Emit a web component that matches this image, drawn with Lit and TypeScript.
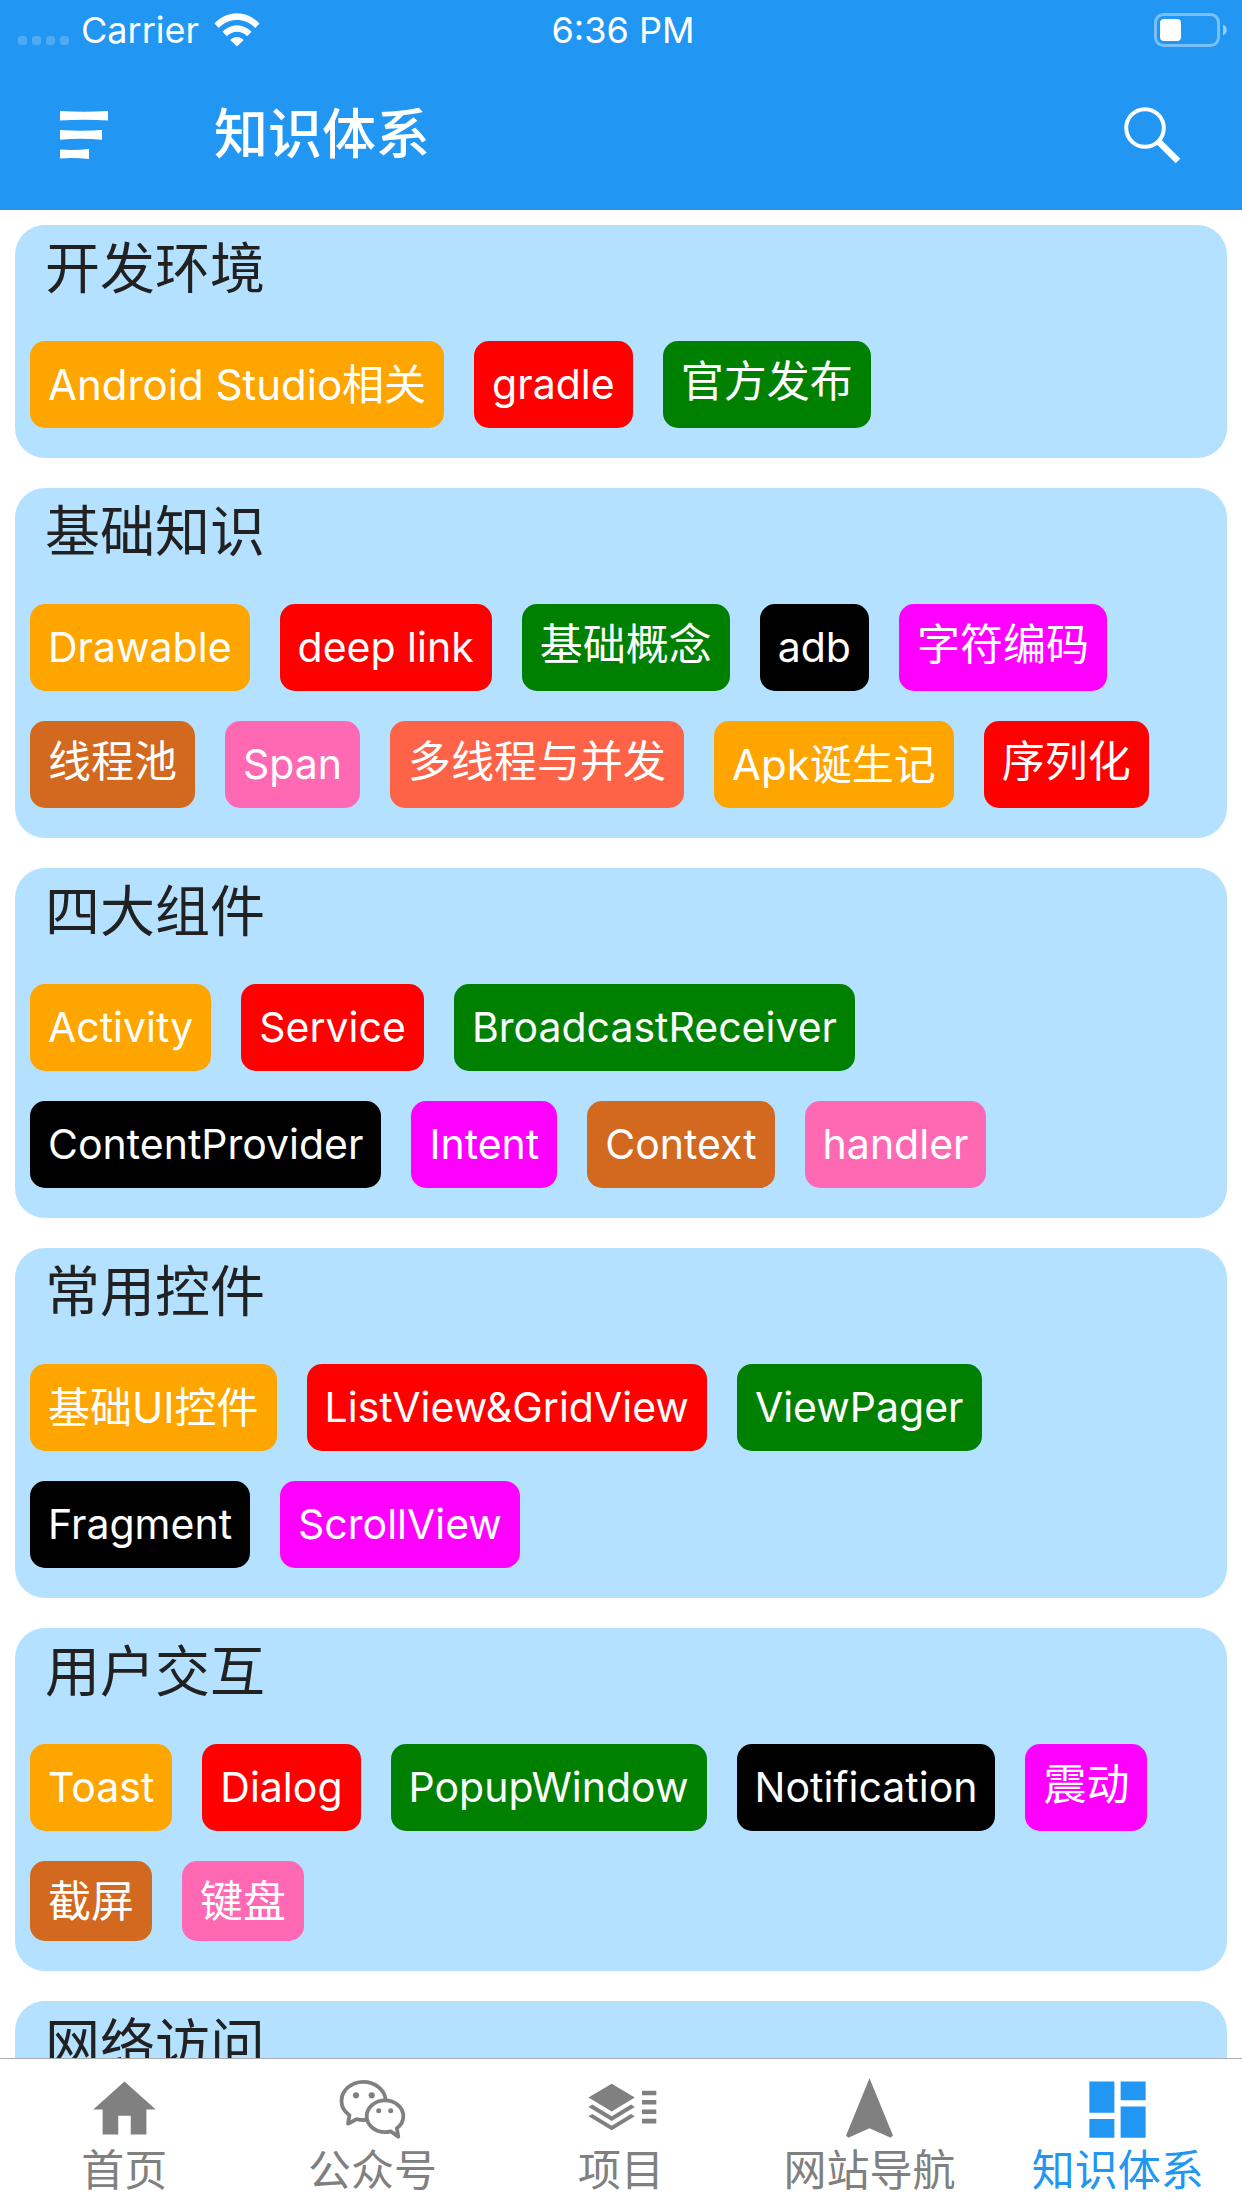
import { LitElement, html, css, svg } from "lit";
import { customElement, property, state } from "lit/decorators.js";
import { classMap } from "lit/directives/class-map.js";

interface Section {
  title: string;
  tags: string[];
}

const SECTIONS: Section[] = [
  { title: "开发环境", tags: ["Android Studio相关", "gradle", "官方发布"] },
  {
    title: "基础知识",
    tags: ["Drawable", "deep link", "基础概念", "adb", "字符编码", "线程池", "Span", "多线程与并发", "Apk诞生记", "序列化"],
  },
  {
    title: "四大组件",
    tags: ["Activity", "Service", "BroadcastReceiver", "ContentProvider", "Intent", "Context", "handler"],
  },
  { title: "常用控件", tags: ["基础UI控件", "ListView&GridView", "ViewPager", "Fragment", "ScrollView"] },
  { title: "用户交互", tags: ["Toast", "Dialog", "PopupWindow", "Notification", "震动", "截屏", "键盘"] },
  { title: "网络访问", tags: [] },
];

const PALETTE = ["orange", "red", "green", "black", "magenta", "chocolate", "pink", "tomato"];

const ICONS = {
  home: svg`<path transform="scale(3.125)" d="M10 20v-6h4v6h5v-8h3L12 3 2 12h3v8z"/>`,
  chat: svg`
    <g fill="none" stroke="currentColor" stroke-width="3.8" stroke-linejoin="round" stroke-linecap="round">
      <path d="M50.6 27.4C49.5 17.6 40 9.8 28.4 9.8 16.2 9.8 6.5 18.3 6.5 29c0 5.800 2.9 10.6 8 14.2L13 51.7l8.7-4.600c2.9.8 5.6 1.1 9 .8"/>
      <path d="M61.8 56.300c4.100-2.900 6.500-7.200 6.500-12 0-8.800-8.200-15.900-18.300-15.900s-18.300 7.100-18.300 15.900S39.900 60.200 50 60.200c2 0 3.900-.3 5.700-.8l7.600 5.300z"/>
    </g>
    <circle cx="21" cy="23.3" r="3.1"/><circle cx="36.7" cy="23.3" r="3.1"/>
    <circle cx="43.7" cy="38.7" r="2.5"/><circle cx="55.7" cy="38.7" r="2.5"/>`,
  layers: svg`
    <path d="M28.7 11.7 51.8 25.5 28.7 39.4 5.5 25.5z"/>
    <path d="M5.5 34.9 9.3 32.6 28.7 44.3 48 32.6 51.8 34.9 28.7 48.9z"/>
    <path d="M5.5 44.3 9.3 42 28.7 53.7 48 42 51.8 44.3 28.7 58.3z"/>
    <path d="M59 18.7H73.300v4.600H59zM59 28H73.300v4.600H59zM59 37.400H73.300V42H59zM59 46.800H73.300v4.600H59z"/>`,
  compass: svg`<path transform="scale(3.125)" d="M12 2 4.5 20.29l.71.71L12 18l6.79 3 .71-.71z"/>`,
  dashboard: svg`<path transform="scale(3.125)" d="M3 13h8V3H3v10zm0 8h8v-6H3v6zm10 0h8V11h-8v10zm0-18v6h8V3h-8z"/>`,
};

const TABS: { label: string; icon: keyof typeof ICONS }[] = [
  { label: "首页", icon: "home" },
  { label: "公众号", icon: "chat" },
  { label: "项目", icon: "layers" },
  { label: "网站导航", icon: "compass" },
  { label: "知识体系", icon: "dashboard" },
];

@customElement("status-bar")
class StatusBar extends LitElement {
  static styles = css`
    :host {
      display: grid;
      grid-template-columns: 1fr auto 1fr;
      align-items: center;
      height: 60px;
      padding: 0 14px 0 18px;
      box-sizing: border-box;
      font-size: 36px;
      line-height: 60px;
    }
    .left {
      display: flex;
      align-items: center;
    }
    .dots {
      width: 51px;
      height: 60px;
      margin-right: 12px;
      fill: rgba(255, 255, 255, 0.2);
    }
    .wifi {
      width: 46px;
      height: 34px;
      margin-left: 15px;
      fill: #fff;
    }
    .battery {
      width: 74px;
      height: 34px;
      justify-self: end;
      display: block;
    }
  `;

  render() {
    return html`
      <div class="left">
        <svg class="dots" viewBox="0 0 51 60" aria-hidden="true">
          ${[0, 14, 28, 42].map((x) => svg`<rect x=${x} y="36" width="9" height="9" rx="3"/>`)}
        </svg>
        <span>Carrier</span>
        <svg class="wifi" viewBox="0 0 46 34" aria-hidden="true">
          <path d="M.5 10.5C13-3.2 33-3.2 45.5 10.5L41.2 15C31 4.4 15 4.4 4.8 15z" />
          <path d="M8.5 18.7C16.5 10 29.5 10 37.5 18.7L33.2 23.2C27.5 17.2 18.5 17.2 12.8 23.2z" />
          <path d="M16.3 27C20.2 22.9 25.8 22.9 29.7 27L23 33.5z" />
        </svg>
      </div>
      <span>6:36 PM</span>
      <svg class="battery" viewBox="0 0 74 34" aria-hidden="true">
        <rect x="1.5" y="1.5" width="63" height="31" rx="8" fill="none" stroke="#fff" stroke-opacity=".4" stroke-width="3" />
        <path d="M69 11.5c5 2 5 9 0 11z" fill="#fff" fill-opacity=".5" />
        <rect x="6" y="6" width="21" height="22" rx="4" fill="#fff" />
      </svg>
    `;
  }
}

@customElement("app-header")
class AppHeader extends LitElement {
  @property() heading = "";

  static styles = css`
    :host {
      display: flex;
      align-items: center;
      height: 150px;
      padding: 0 60px;
      box-sizing: border-box;
    }
    button {
      display: flex;
      padding: 0;
      border: 0;
      background: none;
      color: inherit;
      cursor: pointer;
    }
    .menu svg {
      width: 48px;
      height: 48px;
    }
    .search svg {
      width: 60px;
      height: 60px;
    }
    h1 {
      flex: 1;
      margin: 0 0 0 106px;
      padding-bottom: 2px;
      font-size: 54px;
      font-weight: 500;
      line-height: 75px;
    }
  `;

  render() {
    return html`
      <button class="menu" type="button" aria-label="菜单">
        <svg viewBox="0 0 48 48" fill="currentColor" aria-hidden="true">
          <path d="M0 0Q24 1.5 48 0V9.5Q24 8 0 9.5zM0 19Q21 20.5 42 19V28.7Q21 27 0 28.7zM0 38.5Q14 39.5 29 38V48Q14 46.5 0 47.5z" />
        </svg>
      </button>
      <h1>${this.heading}</h1>
      <button class="search" type="button" aria-label="搜索">
        <svg viewBox="0 0 60 60" fill="none" stroke="currentColor" aria-hidden="true">
          <circle cx="23" cy="23" r="18.8" stroke-width="4" />
          <path d="M36.5 36.5 56 56" stroke-width="6.5" />
        </svg>
      </button>
    `;
  }
}

@customElement("topic-card")
class TopicCard extends LitElement {
  @property({ attribute: false }) section!: Section;

  static styles = css`
    :host {
      display: block;
      flex: none;
      padding: 6px 15px 30px;
      border-radius: 30px;
      background: #b4e1ff;
    }
    h2 {
      margin: 0 0 35px;
      padding: 0 15px;
      color: #212121;
      font-size: 55px;
      font-weight: 400;
      line-height: 75px;
    }
    .tags {
      display: flex;
      flex-wrap: wrap;
      gap: 30px;
    }
    .tag {
      display: flex;
      align-items: flex-start;
      padding: 15px 18px;
      border: 0;
      border-radius: 15px;
      color: #fff;
      font: inherit;
      font-size: 42px;
      line-height: 57px;
      cursor: pointer;
    }
    .latin {
      font-size: 41px;
      line-height: 57px;
    }
    .han {
      font-size: 43px;
      line-height: 50px;
    }
    .orange { background: #ffa500; }
    .red { background: #ff0000; }
    .green { background: #008000; }
    .black { background: #000000; }
    .magenta { background: #ff00ff; }
    .chocolate { background: #d2691e; }
    .pink { background: #ff69b4; }
    .tomato { background: #ff6347; }
  `;

  render() {
    return html`
      <h2>${this.section.title}</h2>
      <div class="tags">
        ${this.section.tags.map((tag, i) => {
          const classes = {
            tag: true,
            han: !/[A-Za-z]/.test(tag),
            latin: !/[\u4e00-\u9fff]/.test(tag),
            [PALETTE[i % PALETTE.length]]: true,
          };
          return html`<button type="button" class=${classMap(classes)}>${tag}</button>`;
        })}
      </div>
    `;
  }
}

@customElement("tab-bar")
class TabBar extends LitElement {
  @state() private active = 4;

  static styles = css`
    :host {
      display: block;
      border-top: 1px solid #acacac;
      background: #fff;
    }
    nav {
      display: grid;
      grid-template-columns: repeat(5, 1fr);
      height: 149px;
    }
    a {
      display: flex;
      flex-direction: column;
      align-items: center;
      padding-top: 13px;
      color: #808080;
      font-size: 43px;
      line-height: 46px;
      text-decoration: none;
    }
    .active {
      color: #2196f3;
    }
    svg {
      width: 75px;
      height: 75px;
      fill: currentColor;
    }
  `;

  private select(event: Event, index: number) {
    event.preventDefault();
    this.active = index;
  }

  render() {
    return html`
      <nav>
        ${TABS.map(
          (tab, i) => html`
            <a href="#" class=${classMap({ active: i === this.active })} @click=${(e: Event) => this.select(e, i)}>
              <svg viewBox="0 0 75 75" aria-hidden="true">${ICONS[tab.icon]}</svg>
              <span>${tab.label}</span>
            </a>
          `
        )}
      </nav>
    `;
  }
}

@customElement("app-root")
class AppRoot extends LitElement {
  static styles = css`
    :host {
      display: flex;
      flex-direction: column;
      height: 100vh;
      background: #fff;
      font-family: Inter, "Noto Sans CJK SC", sans-serif;
    }
    header {
      flex: none;
      background: #2196f3;
      color: #fff;
    }
    main {
      flex: 1;
      min-height: 0;
      display: flex;
      flex-direction: column;
      gap: 30px;
      padding: 15px;
      overflow-y: auto;
      scrollbar-width: none;
    }
    tab-bar {
      flex: none;
    }
  `;

  render() {
    return html`
      <header>
        <status-bar></status-bar>
        <app-header heading="知识体系"></app-header>
      </header>
      <main>${SECTIONS.map((section) => html`<topic-card .section=${section}></topic-card>`)}</main>
      <tab-bar></tab-bar>
    `;
  }
}
